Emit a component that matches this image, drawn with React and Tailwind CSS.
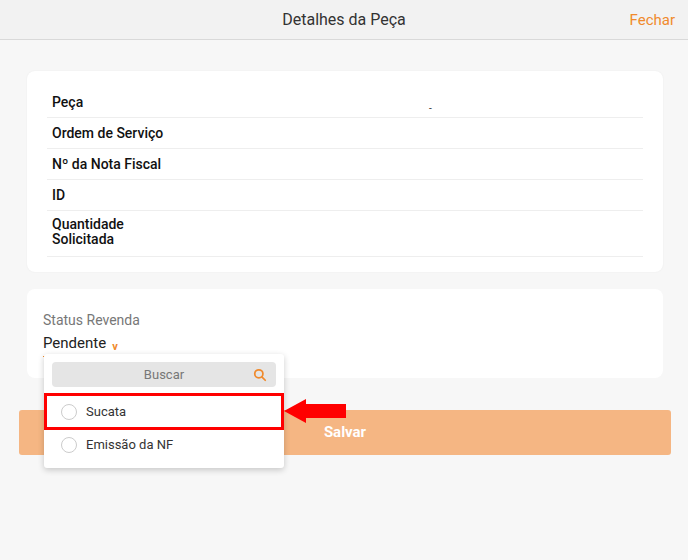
export default function App() {
  const rows = [["Peça"], ["Ordem de Serviço"], ["Nº da Nota Fiscal"], ["ID"], ["Quantidade", "Solicitada"]];
  return (
    <div className="relative w-[688px] h-[560px] bg-[#f7f7f7] overflow-hidden" style={{ fontFamily: "Roboto, 'Liberation Sans', sans-serif" }}>
      <div className="h-[40px] bg-[#f2f2f2] border-b border-[#d9d9d9] flex items-center justify-center relative">
        <span className="text-[16px] text-[#333]">Detalhes da Peça</span>
        <span className="absolute right-[13px] top-[9px] text-[15px] text-[#f08a2c]">Fechar</span>
      </div>
      <div className="ml-[27px] mr-[25px] mt-[31px] bg-white rounded-[8px] px-[20px] pt-[16px] pb-[15px] shadow-[0_0_2px_rgba(0,0,0,0.06)]">
        {rows.map((r, i) => (
          <div key={i} className={`border-b border-[#eeeeee] px-[5px] ${i === 4 ? "pt-[6px] pb-[9px]" : "h-[31px] flex items-center"} relative`}>
            <div className="text-[14px] font-medium text-[#111] leading-[15px]">
              {r.map((t) => <div key={t}>{t}</div>)}
            </div>
            {i === 0 && <span className="absolute left-[382px] top-[14px] text-[10px] text-[#333]">-</span>}
          </div>
        ))}
      </div>
      <div className="ml-[27px] mr-[25px] mt-[17px] bg-white rounded-[8px] h-[89px] px-[16px] pt-[21px]">
        <div className="text-[14px] text-[#777]">Status Revenda</div>
        <div className="flex items-end gap-[6px] mt-[1px]">
          <span className="text-[15px] text-[#222] border-b border-[#f08a2c] pb-[1px]">Pendente</span>
          <span className="text-[11px] font-bold text-[#f08a2c] mb-[1px]">v</span>
        </div>
      </div>
      <div className="ml-[19px] mr-[17px] mt-[32px] h-[45px] bg-[#f5b683] rounded-[3px] flex items-center justify-center text-white text-[15px] font-bold">Salvar</div>

      <div className="absolute left-[44px] top-[354px] w-[240px] h-[114px] bg-white rounded-[3px] shadow-[0_2px_6px_rgba(0,0,0,0.2)] pt-[8px]">
        <div className="mx-[8px] h-[25px] bg-[#e5e5e5] rounded-[4px] flex items-center justify-center relative text-[13px] text-[#777]">
          Buscar
          <svg className="absolute right-[9px] top-[6px]" width="14" height="14" viewBox="0 0 24 24" fill="none" stroke="#f08a2c" strokeWidth="3" strokeLinecap="round"><circle cx="10" cy="10" r="7" /><path d="M15.5 15.5L21 21" /></svg>
        </div>
        <div className="mt-[6px] h-[37px] border-[3px] border-[#ff0000] flex items-center px-[14px] gap-[9px]">
          <span className="w-[16px] h-[16px] rounded-full border border-[#ccc]" />
          <span className="text-[13px] text-[#333]">Sucata</span>
        </div>
        <div className="h-[30px] flex items-center px-[17px] gap-[9px]">
          <span className="w-[16px] h-[16px] rounded-full border border-[#ccc]" />
          <span className="text-[13px] text-[#333]">Emissão da NF</span>
        </div>
      </div>
      <svg className="absolute left-[284px] top-[398px]" width="63" height="26" viewBox="0 0 63 26"><polygon points="0,13 22,1 22,6 62,6 62,20 22,20 22,25" fill="#ff0000" /></svg>
    </div>
  );
}
